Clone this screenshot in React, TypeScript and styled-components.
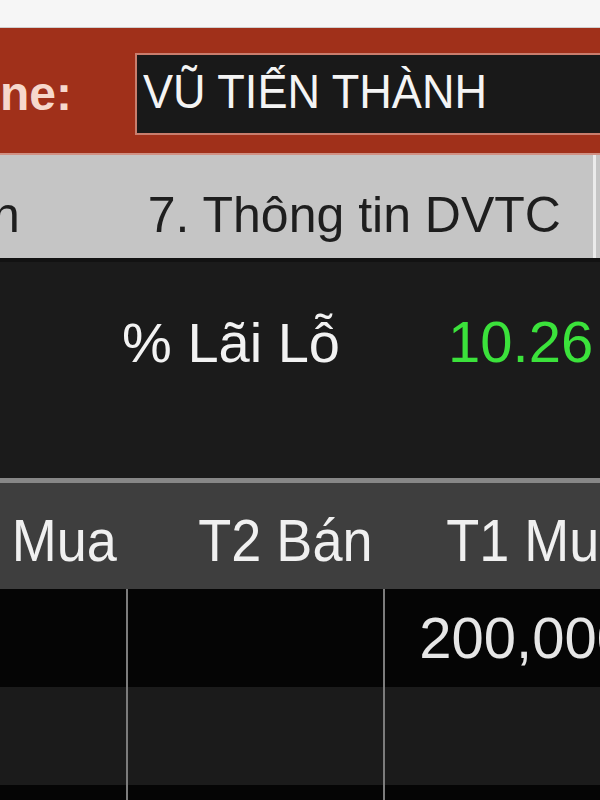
import React from 'react';
import styled, { createGlobalStyle } from 'styled-components';

const GlobalStyle = createGlobalStyle`
  html, body {
    margin: 0;
    padding: 0;
    background: #1c1c1c;
  }
  body {
    font-family: 'Liberation Sans', Arial, sans-serif;
  }
`;

const Page = styled.div`
  width: 600px;
  height: 800px;
  overflow: hidden;
  display: flex;
  flex-direction: column;
  background: #1c1c1c;
`;

const TopStrip = styled.div`
  height: 27px;
  flex-shrink: 0;
  background: #f6f6f6;
  border-bottom: 1px solid #cfcfcf;
`;

// Customer name bar
const NameBar = styled.div`
  height: 127px;
  box-sizing: border-box;
  flex-shrink: 0;
  display: flex;
  align-items: flex-start;
  padding-top: 25px;
  background: #a0301a;
  border-bottom: 2px solid #d09184;
`;

const NameLabel = styled.div`
  width: 135px;
  flex-shrink: 0;
  margin-top: 17px;
  font-size: 48px;
  font-weight: bold;
  line-height: 1;
  color: #f6d8cc;
  white-space: nowrap;
`;

const NameBox = styled.div`
  flex: 1;
  height: 82px;
  box-sizing: border-box;
  margin-right: -20px;
  padding: 12px 0 0 6px;
  background: #191919;
  border: 2px solid #c97d6d;
  font-size: 49px;
  line-height: 1;
  color: #f4f4f4;
  white-space: nowrap;
`;

const NameText = styled.span`
  display: inline-block;
  transform: scaleX(0.92);
  transform-origin: left center;
`;

// Tabs
const TabBar = styled.div`
  height: 107px;
  box-sizing: border-box;
  flex-shrink: 0;
  display: flex;
  align-items: stretch;
  background: #c5c5c5;
  border-bottom: 4px solid #121212;
  overflow: hidden;
`;

const Tab = styled.div<{ $offset: number }>`
  margin-left: ${(p) => p.$offset}px;
  padding-top: 35px;
  font-size: 50px;
  line-height: 1;
  color: #1e1e1e;
  white-space: nowrap;
`;

const TabDivider = styled.div`
  margin-left: 32px;
  width: 3px;
  background: #ebebeb;
`;

// Profit / loss summary
const InfoPanel = styled.div`
  height: 216px;
  box-sizing: border-box;
  flex-shrink: 0;
  display: flex;
  align-items: baseline;
  padding-top: 51px;
  background: #1b1b1b;
`;

const InfoLabel = styled.div`
  width: 340px;
  text-align: right;
  font-size: 56px;
  line-height: 1;
  color: #f2f2f2;
  white-space: nowrap;
`;

const InfoValue = styled.div`
  margin-left: 108px;
  font-size: 58px;
  line-height: 1;
  color: #3be23b;
  white-space: nowrap;
`;

// Table
const Table = styled.div`
  flex: 1;
  display: flex;
  flex-direction: column;
`;

const Row = styled.div<{ $variant: 'head' | 'dark' | 'light' }>`
  display: grid;
  grid-template-columns: 126px 257px 257px;
  flex-shrink: 0;
  box-sizing: border-box;
  height: ${(p) => (p.$variant === 'head' ? 111 : 98)}px;
  background: ${(p) =>
    p.$variant === 'head' ? '#3e3e3e' : p.$variant === 'dark' ? '#050505' : '#1b1b1b'};
  border-top: ${(p) => (p.$variant === 'head' ? '5px solid #878787' : 'none')};
`;

const HeadCell = styled.div`
  padding: 28px 11px 0 0;
  text-align: right;
  font-size: 60px;
  line-height: 1;
  color: #f0f0f0;
  white-space: nowrap;
`;

const HeadText = styled.span`
  display: inline-block;
  transform: scaleX(0.9);
  transform-origin: right center;
`;

const Cell = styled.div<{ $divider?: boolean }>`
  box-sizing: border-box;
  padding: 20px 11px 0 0;
  text-align: right;
  font-size: 58px;
  line-height: 1;
  color: #e6e6e6;
  white-space: nowrap;
  border-left: ${(p) => (p.$divider ? '2px solid #7c7c7c' : 'none')};
`;

const columns = ['Mua', 'T2 Bán', 'T1 Mua'];

const rows: { variant: 'dark' | 'light'; values: string[] }[] = [
  { variant: 'dark', values: ['', '', '200,000'] },
  { variant: 'light', values: ['', '', ''] },
  { variant: 'dark', values: ['', '', ''] },
];

export default function App() {
  return (
    <>
      <GlobalStyle />
      <Page>
        <TopStrip />
        <NameBar>
          <NameLabel>ne:</NameLabel>
          <NameBox>
            <NameText>VŨ TIẾN THÀNH</NameText>
          </NameBox>
        </NameBar>
        <TabBar>
          <Tab $offset={-8}>n</Tab>
          <Tab $offset={128}>7. Thông tin DVTC</Tab>
          <TabDivider />
        </TabBar>
        <InfoPanel>
          <InfoLabel>% Lãi Lỗ</InfoLabel>
          <InfoValue>10.26</InfoValue>
        </InfoPanel>
        <Table>
          <Row $variant="head">
            {columns.map((c) => (
              <HeadCell key={c}>
                <HeadText>{c}</HeadText>
              </HeadCell>
            ))}
          </Row>
          {rows.map((r, i) => (
            <Row key={i} $variant={r.variant}>
              {r.values.map((v, j) => (
                <Cell key={j} $divider={j > 0}>
                  {v}
                </Cell>
              ))}
            </Row>
          ))}
        </Table>
      </Page>
    </>
  );
}
